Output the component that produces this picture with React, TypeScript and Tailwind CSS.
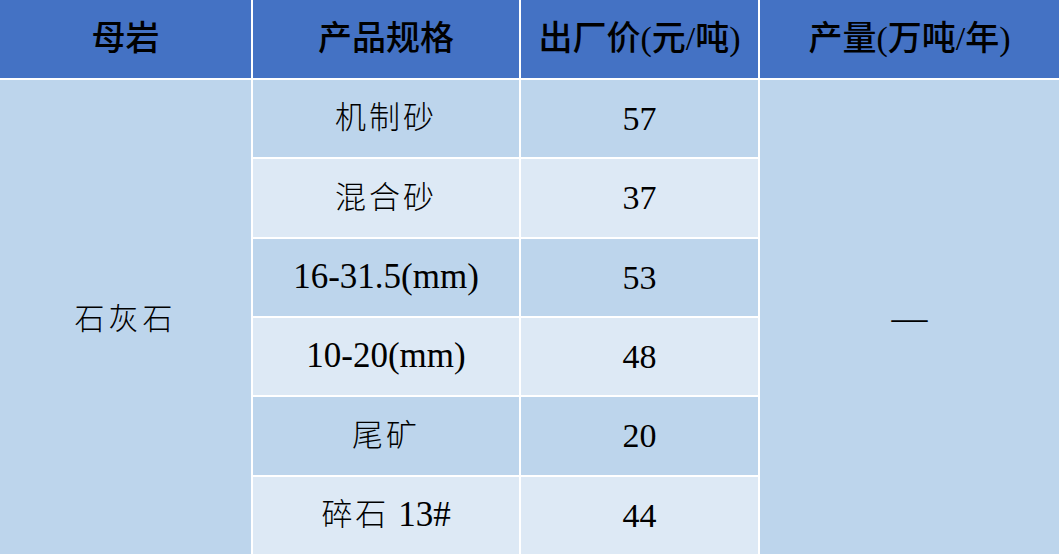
import React from "react";

const rows = [
  { spec: "机制砂", price: "57", light: false },
  { spec: "混合砂", price: "37", light: true },
  { spec: "16-31.5(mm)", price: "53", light: false },
  { spec: "10-20(mm)", price: "48", light: true },
  { spec: "尾矿", price: "20", light: false },
  { spec: "碎石 13#", price: "44", light: true },
];

const font = { fontFamily: '"Liberation Serif", "Noto Sans CJK SC", serif' };

function splitRuns(s: string) {
  return s.match(/[\u4e00-\u9fff]+|[^\u4e00-\u9fff]+/g) || [];
}

function Header({ text }: { text: string }) {
  return (
    <div className="bg-[#4472c4] flex items-center justify-center text-[34px] pb-[2px]">
      {splitRuns(text).map((r, i) =>
        /[\u4e00-\u9fff]/.test(r) ? (
          <span key={i} className="font-medium">
            {r}
          </span>
        ) : (
          <span key={i} className="font-normal">
            {r}
          </span>
        )
      )}
    </div>
  );
}

function Spec({ text }: { text: string }) {
  return (
    <>
      {splitRuns(text).map((r, i) =>
        /[\u4e00-\u9fff]/.test(r) ? (
          <span key={i} className="font-light tracking-[3px] text-[31px]">
            {r}
          </span>
        ) : (
          <span key={i} className="text-[35px] whitespace-pre">
            {r}
          </span>
        )
      )}
    </>
  );
}

export default function App() {
  return (
    <div
      className="w-[1059px] h-[554px] bg-white grid grid-cols-[251px_266px_237px_1fr] grid-rows-[78px_repeat(6,1fr)] gap-[2px] text-black overflow-hidden"
      style={font}
    >
      {["母岩", "产品规格", "出厂价(元/吨)", "产量(万吨/年)"].map((h) => (
        <Header key={h} text={h} />
      ))}
      <div className="bg-[#bdd5ec] row-start-2 row-span-6 col-start-1 flex items-center justify-center text-[30px] font-light tracking-[4px] pt-[2px]">
        石灰石
      </div>
      {rows.map((r, i) => (
        <React.Fragment key={r.spec}>
          <div
            className={`${r.light ? "bg-[#dde9f5]" : "bg-[#bdd5ec]"} col-start-2 flex items-center justify-center`}
            style={{ gridRowStart: i + 2 }}
          >
            <Spec text={r.spec} />
          </div>
          <div
            className={`${r.light ? "bg-[#dde9f5]" : "bg-[#bdd5ec]"} col-start-3 flex items-center justify-center text-[34px]`}
            style={{ gridRowStart: i + 2 }}
          >
            {r.price}
          </div>
        </React.Fragment>
      ))}
      <div className="bg-[#bdd5ec] row-start-2 row-span-6 col-start-4 flex items-center justify-center text-[36px] pt-[2px]">
        —
      </div>
    </div>
  );
}
